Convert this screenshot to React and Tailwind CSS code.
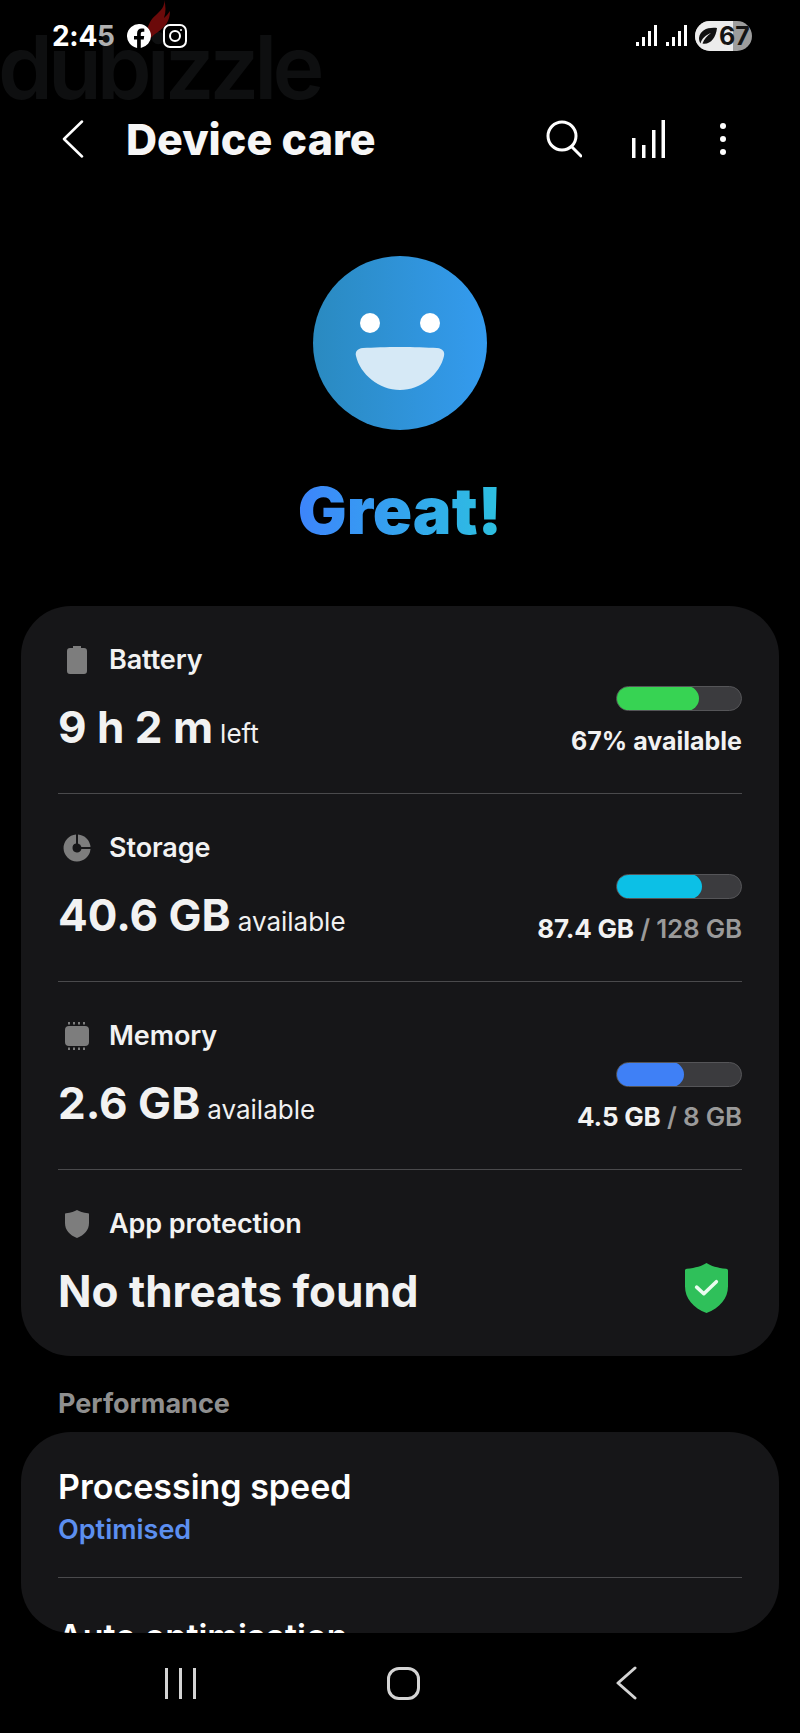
import React from "react";

const font = "font-['Inter','Liberation_Sans',sans-serif]";

function BatteryIcon() {
  return (
    <svg width="20" height="28" viewBox="0 0 20 28">
      <path d="M6 0h8v2h3a3 3 0 0 1 3 3v20a3 3 0 0 1-3 3H3a3 3 0 0 1-3-3V5a3 3 0 0 1 3-3h3z" fill="#7d7d7d" />
    </svg>
  );
}

function StorageIcon() {
  return (
    <svg width="28" height="28" viewBox="0 0 28 28">
      <path d="M13 .5v9.100A4.500 4.500 0 1 0 18.400 15h9.100A13.500 13.500 0 1 1 13 .5z" fill="#7d7d7d" />
      <path d="M15 .5A13.500 13.500 0 0 1 27.500 13h-9.100A4.500 4.500 0 0 0 15 9.600z" fill="#7d7d7d" />
    </svg>
  );
}

function MemoryIcon() {
  return (
    <svg width="26" height="28" viewBox="0 0 26 28">
      <rect x="1" y="4" width="24" height="20" rx="4" fill="#7d7d7d" />
      {[4, 9, 14, 19].map((x) => (
        <g key={x} fill="#7d7d7d">
          <rect x={x} y="0" width="2" height="2.500" />
          <rect x={x} y="25.500" width="2" height="2.500" />
        </g>
      ))}
    </svg>
  );
}

function ShieldIcon({ color = "#7d7d7d", check = false, w = 24, h = 28 }) {
  return (
    <svg width={w} height={h} viewBox="0 0 24 28">
      <path d="M12 0c2.500 1.600 6 2.800 11 3.200.6 0 1 .5 1 1V13c0 7-4.600 12-12 15C4.600 25 0 20 0 13V4.200c0-.5.4-1 1-1C6 2.800 9.500 1.600 12 0z" fill={color} />
      {check && <path d="M6.500 13.500l4 3.700 7-6.700" fill="none" stroke="#eafbef" strokeWidth="2" strokeLinecap="round" strokeLinejoin="round" />}
    </svg>
  );
}

const rows = [
  { label: "Battery", icon: BatteryIcon, value: "9 h 2 m", unit: "left", fill: "w-[67%]", color: "bg-[#37d353]", used: "67% available" },
  { label: "Storage", icon: StorageIcon, value: "40.6 GB", unit: "available", fill: "w-[69%]", color: "bg-[#0cc0e6]", used: "87.4 GB", total: "128 GB" },
  { label: "Memory", icon: MemoryIcon, value: "2.6 GB", unit: "available", fill: "w-[55%]", color: "bg-[#3f80f6]", used: "4.5 GB", total: "8 GB" },
];

function Label({ icon: Icon, children }) {
  return (
    <div className="flex items-center h-[32px]">
      <div className="w-[38px] mr-[13px] flex justify-center">
        <Icon />
      </div>
      <span className="text-[27px] font-semibold text-[#f2f2f2] tracking-[-0.1px]">{children}</span>
    </div>
  );
}

function Row({ row }) {
  return (
    <div className="h-[188px] border-b border-[#4a4a4c] flex justify-between">
      <div className="pt-[38px]">
        <Label icon={row.icon}>{row.label}</Label>
        <div className="mt-[25px] flex items-baseline gap-[7px] leading-[52px]">
          <span className="text-[44px] font-bold text-[#f2f2f2]">{row.value}</span>
          <span className="text-[26px] text-[#f0f0f0]">{row.unit}</span>
        </div>
      </div>
      <div className="pt-[80px] flex flex-col items-end">
        <div className="w-[126px] h-[25px] rounded-full bg-[#3b3b3e] border border-[#555558] relative overflow-hidden">
          <div className={`absolute -left-px -top-px -bottom-px rounded-full ${row.fill} ${row.color}`} />
        </div>
        <div className={`mt-[15px] font-bold text-[#f2f2f2] leading-[30px] whitespace-nowrap ${row.total ? "text-[26px] tracking-[-0.2px]" : "text-[25px]"}`}>
          {row.used}
          {row.total && <span className="text-[#9a9a9a] font-semibold"> / {row.total}</span>}
        </div>
      </div>
    </div>
  );
}

export default function App() {
  return (
    <div className={`${font} relative w-[800px] h-[1733px] bg-black overflow-hidden flex flex-col`}>
      {/* watermark under the status bar */}
      <div className="absolute left-[-2px] top-[12px] text-[88px] font-semibold leading-[110px] text-[#0e0f10] tracking-[-5px]">dubizzle</div>
      <svg className="absolute left-[143px] top-0" width="30" height="46" viewBox="0 0 30 46">
        <path d="M21 0c1 7-3 10-8 15C7 20 3 27 2 46c3-6 8-11 13-14 7-5 12-11 12-21-2 3-4 5-6 7 2-6 2-12 0-18z" fill="#6b0a0a" />
      </svg>

      <div className="relative h-[99px] flex items-start pl-[52px] pr-[48px] pt-[20px] justify-between">
        <div className="flex items-center h-[32px]">
          <span className="text-[28px] font-bold text-white leading-none tracking-[-0.3px]">2:4<span className="text-[#b0b0b0]">5</span></span>
          <svg className="ml-[12px]" width="24" height="24" viewBox="0 0 24 24">
            <path d="M24 12a12 12 0 1 0-13.900 11.900v-8.400H7V12h3.100V9.300c0-3 1.800-4.700 4.500-4.700 1.300 0 2.700.2 2.700.2v3h-1.500c-1.500 0-2 .9-2 1.900V12h3.400l-.5 3.500h-2.900v8.400A12 12 0 0 0 24 12z" fill="#fff" />
          </svg>
          <svg className="ml-[12px]" width="24" height="24" viewBox="0 0 24 24" fill="none" stroke="#fff" strokeWidth="2">
            <rect x="1" y="1" width="22" height="22" rx="6" />
            <circle cx="12" cy="12" r="5" />
            <circle cx="18" cy="6" r="1" fill="#fff" stroke="none" />
          </svg>
        </div>
        <div className="flex items-center h-[32px]">
          <svg width="21" height="22" viewBox="0 0 21 22" fill="#fff">
            <rect x="0" y="17" width="3" height="4" /><rect x="6" y="12" width="3" height="9" /><rect x="12" y="6" width="3" height="15" /><rect x="18" y="0" width="3" height="21" />
          </svg>
          <svg className="ml-[9px]" width="21" height="22" viewBox="0 0 21 22" fill="#fff">
            <rect x="0" y="17" width="3" height="4" /><rect x="6" y="12" width="3" height="9" /><rect x="12" y="6" width="3" height="15" /><rect x="18" y="0" width="3" height="21" />
          </svg>
          <div className="ml-[8px] relative w-[57px] h-[30px] rounded-full bg-[#9d9d9d] overflow-hidden flex items-center">
            <div className="absolute left-0 top-0 bottom-0 w-[38px] bg-[#ececec]" />
            <svg className="relative ml-[3px]" width="20" height="18" viewBox="0 0 20 18">
              <path d="M19 1C10 0 2 3 1 11c0 2 .5 4 1.500 5.500C4 11 8 8 13 6 9 9 6 12 4.500 16.500 12 18 18 11 19 1z" fill="#111" />
            </svg>
            <span className="relative ml-[1px] text-[25px] leading-none font-bold text-[#151515]">67</span>
          </div>
        </div>
      </div>

      <div className="relative h-[80px] flex items-center pl-[62px]">
        <svg width="22" height="38" viewBox="0 0 22 38" fill="none" stroke="#fff" strokeWidth="2.500" strokeLinecap="round" strokeLinejoin="round">
          <path d="M20 1.500L2 19l18 17.500" />
        </svg>
        <h1 className="ml-[42px] text-[43px] font-extrabold text-[#f6f6f6]">Device care</h1>
        <svg className="ml-auto" width="36" height="38" viewBox="0 0 36 38" fill="none" stroke="#fff" strokeWidth="3" strokeLinecap="round">
          <circle cx="16" cy="16" r="14" />
          <path d="M26 27l9 9" />
        </svg>
        <svg className="ml-[50px]" width="33" height="38" viewBox="0 0 33 38" fill="#fff">
          <rect x="0" y="18" width="3.500" height="20" /><rect x="10" y="25" width="3.500" height="13" /><rect x="20" y="10" width="3.500" height="28" /><rect x="29.500" y="0" width="3.500" height="38" />
        </svg>
        <div className="ml-[55px] mr-[74px] flex flex-col gap-[7px]">
          <div className="w-[6px] h-[6px] rounded-full bg-white" />
          <div className="w-[6px] h-[6px] rounded-full bg-white" />
          <div className="w-[6px] h-[6px] rounded-full bg-white" />
        </div>
      </div>

      <div className="relative flex flex-col items-center">
        <svg className="mt-[77px]" width="174" height="174" viewBox="0 0 174 174">
          <defs>
            <linearGradient id="face" x1="0" y1="0" x2="1" y2="0">
              <stop offset="0" stopColor="#2a8ac0" />
              <stop offset="1" stopColor="#349bef" />
            </linearGradient>
          </defs>
          <circle cx="87" cy="87" r="87" fill="url(#face)" />
          <circle cx="57" cy="67" r="10" fill="#fff" />
          <circle cx="117" cy="67" r="10" fill="#fff" />
          <path d="M50 92C70 90.500 104 90.500 124 92C130 92.500 132 96 131 100C127 118 108 134 87 134C66 134 47 118 43 100C42 96 44 92.500 50 92Z" fill="#d6e9f6" />
        </svg>
        <div className="mt-[43px] text-[65px] leading-[75px] font-black bg-linear-to-r from-[#3d84fb] to-[#2dc0df] bg-clip-text text-transparent">Great!</div>
      </div>

      <div className="relative mt-[58px] mx-[21px] h-[750px] rounded-[50px] bg-[#161618] px-[37px] overflow-hidden">
        {rows.map((row) => (
          <Row key={row.label} row={row} />
        ))}
        <div className="pt-[38px] flex justify-between">
          <div>
            <Label icon={ShieldIcon}>App protection</Label>
            <div className="mt-[25px] text-[44px] font-bold text-[#f2f2f2] leading-[52px]">No threats found</div>
          </div>
          <div className="pt-[54px] pr-[14px]">
            <ShieldIcon color="#2fc05a" check w={43} h={52} />
          </div>
        </div>
      </div>

      <div className="relative mt-[32px] pl-[58px] text-[27px] font-bold text-[#8f8f8f] leading-[32px]">Performance</div>

      <div className="relative mt-[12px] mx-[21px] h-[201px] rounded-[50px] bg-[#161618] px-[37px] overflow-hidden">
        <div className="h-[146px] border-b border-[#4a4a4c] pt-[36px]">
          <div className="text-[34px] font-semibold text-white leading-[38px]">Processing speed</div>
          <div className="mt-[8px] text-[27px] font-semibold text-[#5c8ff0] leading-[32px]">Optimised</div>
        </div>
        <div className="pt-[40px] text-[34px] font-semibold text-white leading-[38px]">Auto optimisation</div>
      </div>

      <div className="relative flex-1 flex items-center justify-between pl-[165px] pr-[163px]">
        <div className="flex gap-[11px]">
          <div className="w-[3px] h-[31px] bg-[#d4d4d4]" />
          <div className="w-[3px] h-[31px] bg-[#d4d4d4]" />
          <div className="w-[3px] h-[31px] bg-[#d4d4d4]" />
        </div>
        <div className="w-[33px] h-[33px] mr-[4px] rounded-[12px] border-[3px] border-[#d4d4d4]" />
        <svg width="22" height="34" viewBox="0 0 22 34" fill="none" stroke="#d4d4d4" strokeWidth="3" strokeLinecap="round" strokeLinejoin="round">
          <path d="M20 2L3 17l17 15" />
        </svg>
      </div>
    </div>
  );
}
